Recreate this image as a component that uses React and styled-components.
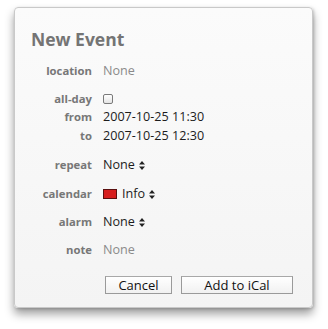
import React from "react";
import styled, { createGlobalStyle } from "styled-components";

const Global = createGlobalStyle`
  html, body { margin: 0; padding: 0; background: #ffffff; }
  body { font-family: "Open Sans", "DejaVu Sans", sans-serif; }
`;

const Page = styled.div`
  width: 328px;
  height: 329px;
  padding: 7px 0 0 14px;
  box-sizing: border-box;
`;

const Panel = styled.div`
  width: 299px;
  height: 301px;
  box-sizing: border-box;
  border: 1px solid #c9c9c9;
  border-radius: 4px;
  background: linear-gradient(#fbfbfb, #f4f4f4);
  box-shadow: 0 6px 10px rgba(0, 0, 0, 0.38), 1px 1px 3px rgba(0, 0, 0, 0.18);
  padding: 20px 19px 0 16px;
  display: flex;
  flex-direction: column;
`;

const Title = styled.h1`
  margin: 0;
  font-size: 17.5px;
  line-height: 22px;
  font-weight: 700;
  color: #747474;
`;

const Form = styled.div`
  display: grid;
  grid-template-columns: 61px 1fr;
  column-gap: 11px;
  margin-top: 12px;
`;

const Label = styled.div`
  text-align: right;
  font-size: 11.3px;
  font-weight: 700;
  color: #777777;
  line-height: 18px;
  margin-top: ${(p) => p.$gap || 0}px;
`;

const Value = styled.div`
  display: flex;
  align-items: center;
  gap: 4px;
  font-size: 12.6px;
  line-height: 18px;
  height: 18px;
  color: ${(p) => (p.$muted ? "#8a8a8a" : "#1c1c1c")};
  margin-top: ${(p) => p.$gap || 0}px;
`;

const Check = styled.span`
  width: 8px;
  height: 8px;
  border: 1px solid #7a7a7a;
  border-radius: 2px;
  background: linear-gradient(#ffffff, #e4e4e4);
`;

const Swatch = styled.span`
  width: 12px;
  height: 8px;
  border: 1px solid #5a1010;
  background: #d61e1e;
  margin-right: 1px;
`;

const Buttons = styled.div`
  display: flex;
  justify-content: flex-end;
  gap: 9px;
  margin-top: 17px;
`;

const Button = styled.button`
  width: ${(p) => p.$w}px;
  height: 18px;
  padding: 0;
  border: 1px solid #9a9a9a;
  border-top-color: #a8a8a8;
  background: linear-gradient(#ffffff, #f1f1f1);
  font-family: "Open Sans", "DejaVu Sans", sans-serif;
  font-size: 13px;
  line-height: 16px;
  color: #111;
`;

const Arrows = () => (
  <svg width="6" height="9" viewBox="0 0 6 9">
    <path d="M3 0 L6 3.5 L0 3.5 Z M0 5.5 L6 5.5 L3 9 Z" fill="#222" />
  </svg>
);

const rows = [
  { label: "location", value: "None", muted: true, gap: 0 },
  { label: "all-day", check: true, gap: 10 },
  { label: "from", value: "2007-10-25 11:30", gap: 0 },
  { label: "to", value: "2007-10-25 12:30", gap: 1 },
  { label: "repeat", value: "None", arrows: true, gap: 11 },
  { label: "calendar", value: "Info", swatch: true, arrows: true, gap: 11 },
  { label: "alarm", value: "None", arrows: true, gap: 10 },
  { label: "note", value: "None", muted: true, gap: 10 },
];

export default function App() {
  return (
    <Page>
      <Global />
      <Panel>
        <Title>New Event</Title>
        <Form>
          {rows.map((r) => (
            <React.Fragment key={r.label}>
              <Label $gap={r.gap}>{r.label}</Label>
              <Value $gap={r.gap} $muted={r.muted}>
                {r.check && <Check />}
                {r.swatch && <Swatch />}
                {r.value}
                {r.arrows && <Arrows />}
              </Value>
            </React.Fragment>
          ))}
        </Form>
        <Buttons>
          <Button $w={67}>Cancel</Button>
          <Button $w={112}>Add to iCal</Button>
        </Buttons>
      </Panel>
    </Page>
  );
}
